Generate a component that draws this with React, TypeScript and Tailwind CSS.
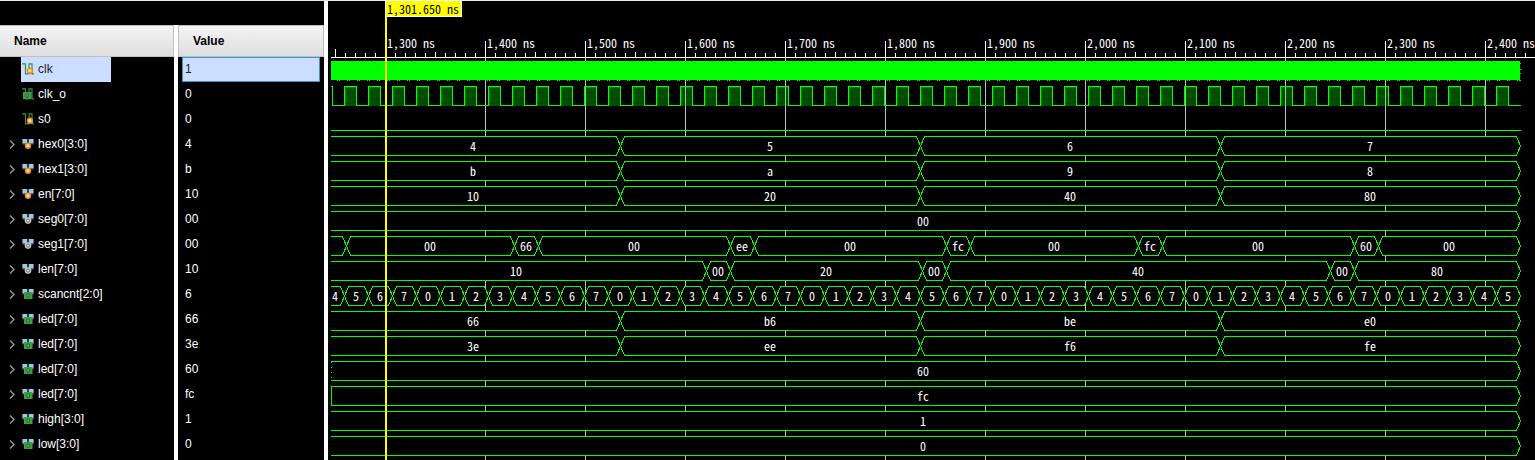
import React from "react";

type IconKind = "wire-in" | "wire-reg" | "bus-in" | "bus-out" | "bus-reg";

interface Signal {
  name: string;
  value: string;
  icon: IconKind;
}

const signals: Signal[] = [
  { name: "clk", value: "1", icon: "wire-in" },
  { name: "clk_o", value: "0", icon: "wire-reg" },
  { name: "s0", value: "0", icon: "wire-in" },
  { name: "hex0[3:0]", value: "4", icon: "bus-in" },
  { name: "hex1[3:0]", value: "b", icon: "bus-in" },
  { name: "en[7:0]", value: "10", icon: "bus-in" },
  { name: "seg0[7:0]", value: "00", icon: "bus-out" },
  { name: "seg1[7:0]", value: "00", icon: "bus-out" },
  { name: "len[7:0]", value: "10", icon: "bus-out" },
  { name: "scancnt[2:0]", value: "6", icon: "bus-reg" },
  { name: "led[7:0]", value: "66", icon: "bus-reg" },
  { name: "led[7:0]", value: "3e", icon: "bus-reg" },
  { name: "led[7:0]", value: "60", icon: "bus-reg" },
  { name: "led[7:0]", value: "fc", icon: "bus-reg" },
  { name: "high[3:0]", value: "1", icon: "bus-reg" },
  { name: "low[3:0]", value: "0", icon: "bus-reg" },
];

function SignalIcon({ kind }: { kind: IconKind }) {
  const wire = kind.startsWith("wire");
  const role = kind.split("-")[1];
  return (
    <svg className="h-3 w-3 shrink-0" viewBox="0 0 12 12" aria-hidden="true">
      {wire ? (
        <path d="M0 0.8H3.5V10.8H7V0.8H10V10.8H12" fill="none" stroke="#2f9446" strokeWidth="1.2" />
      ) : (
        <>
          <path d="M0 1H5.5V5L4 6.5H1L0 5Z" fill="#5f7480" />
          <path d="M12 1H6.5V5L8 6.5H11L12 5Z" fill="#5f7480" />
          <path d="M1 1H5V5H1ZM7 1H11V5H7Z" fill="#9cc9e2" />
        </>
      )}
      {role === "in" && (
        <>
          <circle cx={wire ? 8 : 6} cy="7.8" r="3.2" fill="#e8891c" />
          <circle cx={wire ? 8 : 6} cy="7.8" r="2.1" fill="#f7a94a" />
          <path d={wire ? "M7.2 9V6.8H8.6V8.6" : "M5.3 9V6.8H6.7V8.6"} fill="none" stroke="#fff0d8" strokeWidth="0.9" />
        </>
      )}
      {role === "out" && (
        <>
          <circle cx="6" cy="7.6" r="3.3" fill="#c9c9c9" />
          <circle cx="6" cy="7.6" r="1.5" fill="#eeeeee" stroke="#666666" strokeWidth="1" />
        </>
      )}
      {role === "reg" && (
        <>
          <rect x={wire ? 1 : 2} y="4" width="8.5" height="7" fill="#3f9f45" />
          <ellipse cx={wire ? 5.2 : 6.2} cy="7.6" rx="1.4" ry="2" fill="#55b558" stroke="#22662a" strokeWidth="1" />
        </>
      )}
    </svg>
  );
}

function SignalTable() {
  const header =
    "flex h-8 items-center border-y border-r border-[#c0c0c0] bg-linear-to-b from-[#f4f4f4] to-[#dededf] text-left font-bold text-black";
  return (
    <table className="w-[324px] table-fixed border-separate border-spacing-0 text-xs text-white">
      <thead>
        <tr>
          <th scope="col" className="w-[174px] p-0">
            <div className={`${header} pl-3.5`}>Name</div>
          </th>
          <th scope="col" className="border-l-4 border-white p-0">
            <div className={`${header} border-l pl-3.5`}>Value</div>
          </th>
        </tr>
      </thead>
      <tbody>
        {signals.map((s, i) => {
          const selected = i === 0;
          return (
            <tr key={i} aria-selected={selected}>
              <td className="p-0">
                <div className="flex h-[25px] items-center pl-[9px]">
                  <div className="flex w-3 shrink-0">
                    {s.icon.startsWith("bus") && (
                      <button type="button" aria-label={`Expand ${s.name}`}>
                        <svg className="h-[9px] w-1.5" viewBox="0 0 6 9" aria-hidden="true">
                          <path d="M1 0.5L5 4.5L1 8.5" fill="none" stroke="#a0a0a0" strokeWidth="1.3" />
                        </svg>
                      </button>
                    )}
                  </div>
                  <div
                    className={`flex h-full w-[90px] items-center gap-1 pb-0.5 pl-px ${selected ? "bg-[#cbdeff] text-[#202030]" : ""}`}
                  >
                    <SignalIcon kind={s.icon} />
                    <span>{s.name}</span>
                  </div>
                </div>
              </td>
              <td className="border-l-4 border-white p-0">
                <div className="h-[25px] px-1">
                  <div
                    className={`flex h-full items-center border pb-0.5 pl-0.5 ${selected ? "border-[#3f92d0] bg-[#cbdeff] text-[#202030]" : "border-transparent"}`}
                  >
                    {s.value}
                  </div>
                </div>
              </td>
            </tr>
          );
        })}
        <tr aria-hidden="true">
          <td className="h-[3px] p-0" />
          <td className="h-[3px] border-l-4 border-white p-0" />
        </tr>
      </tbody>
    </table>
  );
}

/* One nanosecond is one pixel; times are in ns. */
const ORIGIN = 1243;
const START = 1246;
const END = 2435;
const LABEL_START = 1241;
const CURSOR = 1300;
const GREEN = "#00ff00";
const ROW = 25;
const FIRST_BUS = 135;
const BUS_HEIGHT = 19;

const px = (t: number) => t - ORIGIN;
const range = (n: number) => Array.from({ length: n }, (_, i) => i);

interface Bus {
  edges: number[];
  labels: string[];
  left?: "solid" | "dotted";
}

const quarters = [1535, 1835, 2135];

const buses: Bus[] = [
  { edges: quarters, labels: ["4", "5", "6", "7"] },
  { edges: quarters, labels: ["b", "a", "9", "8"] },
  { edges: quarters, labels: ["10", "20", "40", "80"] },
  { edges: [], labels: ["00"] },
  {
    edges: [1261, 1429, 1453, 1645, 1669, 1861, 1885, 2053, 2077, 2269, 2293],
    labels: ["", "00", "66", "00", "ee", "00", "fc", "00", "fc", "00", "60", "00"],
  },
  {
    edges: [1621, 1645, 1837, 1861, 2245, 2269],
    labels: ["10", "00", "20", "00", "40", "00", "80"],
  },
  {
    edges: range(49).map((k) => 1259 + 24 * k),
    labels: range(50).map((k) => String((4 + k) % 8)),
  },
  { edges: quarters, labels: ["66", "b6", "be", "e0"] },
  { edges: quarters, labels: ["3e", "ee", "f6", "fe"] },
  { edges: [], labels: ["60"], left: "dotted" },
  { edges: [], labels: ["fc"], left: "solid" },
  { edges: [], labels: ["1"] },
  { edges: [], labels: ["0"] },
];

function BusTrace({ bus, top }: { bus: Bus; top: number }) {
  const y0 = top + 0.5;
  const y1 = y0 + BUS_HEIGHT;
  const mid = (y0 + y1) / 2;
  const stops = [START, ...bus.edges, END];
  return (
    <g>
      {bus.labels.map((label, i) => {
        const a = px(stops[i]) + (i === 0 ? 0 : 0.5);
        const b = px(stops[i + 1]) + 0.5;
        const d =
          i === 0
            ? `M${a} ${y0}H${b - 4}L${b} ${mid}L${b - 4} ${y1}H${a}`
            : `M${a} ${mid}L${a + 4} ${y0}H${b - 4}L${b} ${mid}L${b - 4} ${y1}H${a + 4}Z`;
        const from = i === 0 ? LABEL_START : stops[i];
        return (
          <React.Fragment key={i}>
            <path d={d} fill="#000000" stroke={GREEN} shapeRendering="crispEdges" />
            {label && (
              <text x={Math.round(px((from + stops[i + 1]) / 2))} y={top + 15} textAnchor="middle" fill="#ffffff">
                {label}
              </text>
            )}
          </React.Fragment>
        );
      })}
      {bus.left && (
        <path
          d={`M${px(START) + 0.5} ${y0}V${y1}`}
          stroke={GREEN}
          strokeDasharray={bus.left === "dotted" ? "1 4" : undefined}
          shapeRendering="crispEdges"
        />
      )}
    </g>
  );
}

function Waveform() {
  const majors = range(12).map((k) => 1300 + 100 * k);
  const minors = range(120)
    .map((k) => 1250 + 10 * k)
    .filter((t) => t % 100 !== 0);
  const pulses = range(49).map((k) => 1259 + 24 * k);

  const clkPath =
    `M${px(START)} 85.5H${px(1247) + 0.5}V104.5` +
    pulses.map((t) => `H${px(t) + 0.5}V85.5H${px(t + 12) + 0.5}V104.5`).join("") +
    `H${px(END) + 1}`;

  return (
    <svg
      className="block h-[459px] w-full overflow-visible font-['Noto_Sans_CJK_SC','Liberation_Mono',monospace] text-xs [font-feature-settings:'hwid']"
      role="img"
      aria-label="Signal waveforms"
    >
      <g shapeRendering="crispEdges">
        {majors.map((t) => (
          <React.Fragment key={t}>
            <rect x={px(t)} y="57" width="1" height="402" fill="#c0c0c0" />
            <rect x={px(t)} y="40" width="1" height="17" fill="#ffffff" />
          </React.Fragment>
        ))}
        {minors.map((t) => {
          const y = t === 1250 ? 48 : t % 50 === 0 ? 51 : 52;
          return <rect key={t} x={px(t)} y={y} width="1" height={57 - y} fill="#ffffff" />;
        })}
        <line x1={px(START)} y1="56.5" x2="100%" y2="56.5" stroke="#ffffff" />
      </g>
      {majors.map((t) => (
        <text key={t} x={px(t) + 2} y="47" fill="#ffffff">
          {`${t.toLocaleString("en-US")} ns`}
        </text>
      ))}

      <g shapeRendering="crispEdges">
        <rect x={px(START)} y="60" width={END - START} height="19" fill={GREEN} />
        {range(119).map((k) => (
          <path key={k} d={`M${px(1252 + 10 * k)} 79.5h1m1 0h1`} stroke={GREEN} />
        ))}
        <path d={`M${px(END) + 0.5} 62v1m0 5v1m0 3v1m0 6v1`} stroke={GREEN} />
        {pulses.map((t) => (
          <React.Fragment key={t}>
            <rect x={px(t)} y="85" width="12" height="20" fill={GREEN} fillOpacity="0.3" />
            <path d={`M${px(t) + 1.5} 104V86.5H${px(t) + 12}`} fill="none" stroke={GREEN} strokeOpacity="0.25" />
          </React.Fragment>
        ))}
        <path d={clkPath} fill="none" stroke={GREEN} />
        <path d={`M${px(START)} 129.5H${px(END) + 1}`} stroke={GREEN} />
      </g>

      {buses.map((bus, i) => (
        <BusTrace key={i} bus={bus} top={FIRST_BUS + ROW * i} />
      ))}

      <g shapeRendering="crispEdges">
        <rect x={px(CURSOR)} y="0" width="2" height="459" fill="#ffff00" />
        <rect x={px(CURSOR) + 0.5} y="-0.5" width="76" height="16" fill="#ffff00" stroke="#ffffff" />
      </g>
      <text x={px(CURSOR) + 2} y="13" fill="#000000">
        1,301.650 ns
      </text>
    </svg>
  );
}

export default function App() {
  return (
    <main className="flex min-h-screen border-t border-[#e8e8e8] bg-black font-['Liberation_Sans',Arial,sans-serif]">
      <section className="shrink-0 pt-6" aria-label="Signals">
        <SignalTable />
      </section>
      <div className="w-1 shrink-0 bg-white" />
      <section className="min-w-0 flex-1 overflow-x-clip" aria-label="Waveforms">
        <Waveform />
      </section>
    </main>
  );
}
